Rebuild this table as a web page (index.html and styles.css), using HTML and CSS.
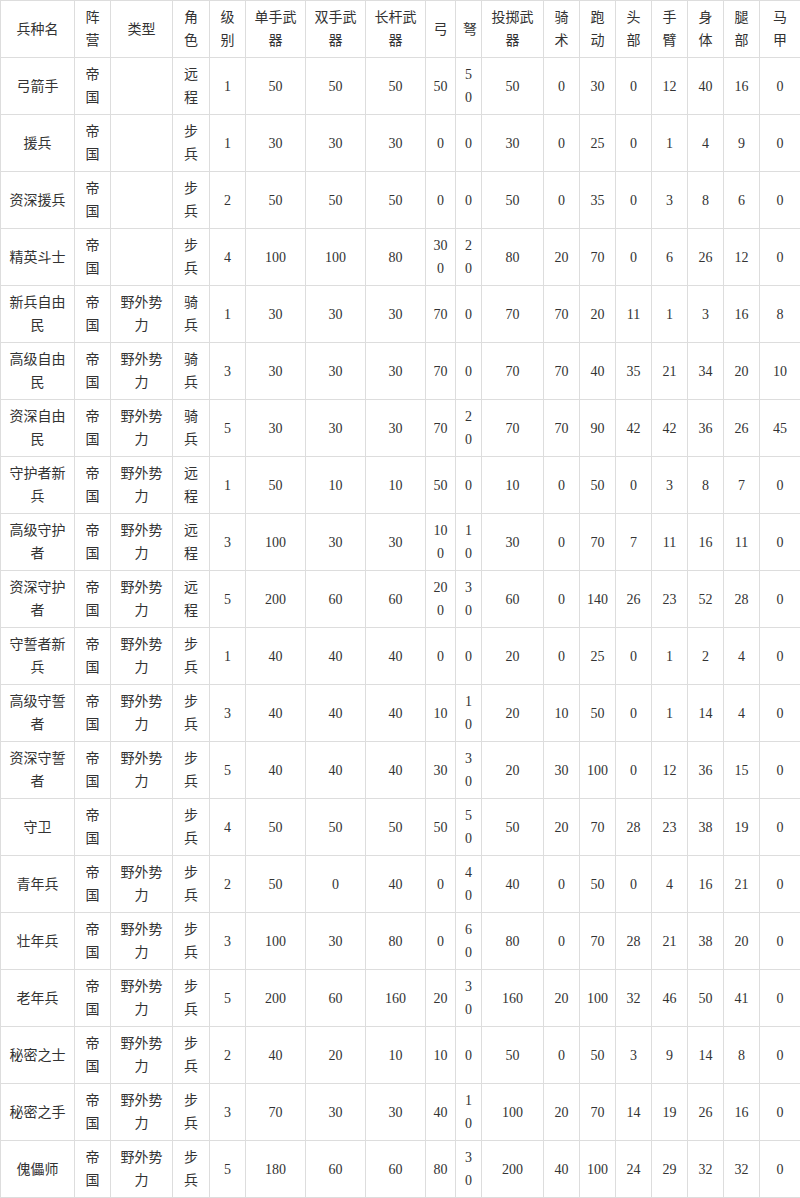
FILE: index.html
```html
<!DOCTYPE html>
<html lang="zh-CN">
<head>
<meta charset="utf-8">
<title>兵种属性</title>
<link rel="stylesheet" href="styles.css">
</head>
<body>
<table class="units">
<colgroup>
<col class="c74"><col class="c36"><col class="c62"><col class="c37"><col class="c36">
<col class="c60"><col class="c60"><col class="c60"><col class="c30"><col class="c26">
<col class="c62"><col class="c36"><col class="c36"><col class="c36"><col class="c36">
<col class="c36"><col class="c36"><col class="c41">
</colgroup>
<thead>
<tr><th>兵种名</th><th>阵营</th><th>类型</th><th>角色</th><th>级别</th><th>单手武器</th><th>双手武器</th><th>长杆武器</th><th>弓</th><th>弩</th><th>投掷武器</th><th>骑术</th><th>跑动</th><th>头部</th><th>手臂</th><th>身体</th><th>腿部</th><th>马甲</th></tr>
</thead>
<tbody>
<tr><td>弓箭手</td><td>帝国</td><td></td><td>远程</td><td>1</td><td>50</td><td>50</td><td>50</td><td>50</td><td>50</td><td>50</td><td>0</td><td>30</td><td>0</td><td>12</td><td>40</td><td>16</td><td>0</td></tr>
<tr><td>援兵</td><td>帝国</td><td></td><td>步兵</td><td>1</td><td>30</td><td>30</td><td>30</td><td>0</td><td>0</td><td>30</td><td>0</td><td>25</td><td>0</td><td>1</td><td>4</td><td>9</td><td>0</td></tr>
<tr><td>资深援兵</td><td>帝国</td><td></td><td>步兵</td><td>2</td><td>50</td><td>50</td><td>50</td><td>0</td><td>0</td><td>50</td><td>0</td><td>35</td><td>0</td><td>3</td><td>8</td><td>6</td><td>0</td></tr>
<tr><td>精英斗士</td><td>帝国</td><td></td><td>步兵</td><td>4</td><td>100</td><td>100</td><td>80</td><td>300</td><td>20</td><td>80</td><td>20</td><td>70</td><td>0</td><td>6</td><td>26</td><td>12</td><td>0</td></tr>
<tr><td>新兵自由民</td><td>帝国</td><td>野外势力</td><td>骑兵</td><td>1</td><td>30</td><td>30</td><td>30</td><td>70</td><td>0</td><td>70</td><td>70</td><td>20</td><td>11</td><td>1</td><td>3</td><td>16</td><td>8</td></tr>
<tr><td>高级自由民</td><td>帝国</td><td>野外势力</td><td>骑兵</td><td>3</td><td>30</td><td>30</td><td>30</td><td>70</td><td>0</td><td>70</td><td>70</td><td>40</td><td>35</td><td>21</td><td>34</td><td>20</td><td>10</td></tr>
<tr><td>资深自由民</td><td>帝国</td><td>野外势力</td><td>骑兵</td><td>5</td><td>30</td><td>30</td><td>30</td><td>70</td><td>20</td><td>70</td><td>70</td><td>90</td><td>42</td><td>42</td><td>36</td><td>26</td><td>45</td></tr>
<tr><td>守护者新兵</td><td>帝国</td><td>野外势力</td><td>远程</td><td>1</td><td>50</td><td>10</td><td>10</td><td>50</td><td>0</td><td>10</td><td>0</td><td>50</td><td>0</td><td>3</td><td>8</td><td>7</td><td>0</td></tr>
<tr><td>高级守护者</td><td>帝国</td><td>野外势力</td><td>远程</td><td>3</td><td>100</td><td>30</td><td>30</td><td>100</td><td>10</td><td>30</td><td>0</td><td>70</td><td>7</td><td>11</td><td>16</td><td>11</td><td>0</td></tr>
<tr><td>资深守护者</td><td>帝国</td><td>野外势力</td><td>远程</td><td>5</td><td>200</td><td>60</td><td>60</td><td>200</td><td>30</td><td>60</td><td>0</td><td>140</td><td>26</td><td>23</td><td>52</td><td>28</td><td>0</td></tr>
<tr><td>守誓者新兵</td><td>帝国</td><td>野外势力</td><td>步兵</td><td>1</td><td>40</td><td>40</td><td>40</td><td>0</td><td>0</td><td>20</td><td>0</td><td>25</td><td>0</td><td>1</td><td>2</td><td>4</td><td>0</td></tr>
<tr><td>高级守誓者</td><td>帝国</td><td>野外势力</td><td>步兵</td><td>3</td><td>40</td><td>40</td><td>40</td><td>10</td><td>10</td><td>20</td><td>10</td><td>50</td><td>0</td><td>1</td><td>14</td><td>4</td><td>0</td></tr>
<tr><td>资深守誓者</td><td>帝国</td><td>野外势力</td><td>步兵</td><td>5</td><td>40</td><td>40</td><td>40</td><td>30</td><td>30</td><td>20</td><td>30</td><td>100</td><td>0</td><td>12</td><td>36</td><td>15</td><td>0</td></tr>
<tr><td>守卫</td><td>帝国</td><td></td><td>步兵</td><td>4</td><td>50</td><td>50</td><td>50</td><td>50</td><td>50</td><td>50</td><td>20</td><td>70</td><td>28</td><td>23</td><td>38</td><td>19</td><td>0</td></tr>
<tr><td>青年兵</td><td>帝国</td><td>野外势力</td><td>步兵</td><td>2</td><td>50</td><td>0</td><td>40</td><td>0</td><td>40</td><td>40</td><td>0</td><td>50</td><td>0</td><td>4</td><td>16</td><td>21</td><td>0</td></tr>
<tr><td>壮年兵</td><td>帝国</td><td>野外势力</td><td>步兵</td><td>3</td><td>100</td><td>30</td><td>80</td><td>0</td><td>60</td><td>80</td><td>0</td><td>70</td><td>28</td><td>21</td><td>38</td><td>20</td><td>0</td></tr>
<tr><td>老年兵</td><td>帝国</td><td>野外势力</td><td>步兵</td><td>5</td><td>200</td><td>60</td><td>160</td><td>20</td><td>30</td><td>160</td><td>20</td><td>100</td><td>32</td><td>46</td><td>50</td><td>41</td><td>0</td></tr>
<tr><td>秘密之士</td><td>帝国</td><td>野外势力</td><td>步兵</td><td>2</td><td>40</td><td>20</td><td>10</td><td>10</td><td>0</td><td>50</td><td>0</td><td>50</td><td>3</td><td>9</td><td>14</td><td>8</td><td>0</td></tr>
<tr><td>秘密之手</td><td>帝国</td><td>野外势力</td><td>步兵</td><td>3</td><td>70</td><td>30</td><td>30</td><td>40</td><td>10</td><td>100</td><td>20</td><td>70</td><td>14</td><td>19</td><td>26</td><td>16</td><td>0</td></tr>
<tr><td>傀儡师</td><td>帝国</td><td>野外势力</td><td>步兵</td><td>5</td><td>180</td><td>60</td><td>60</td><td>80</td><td>30</td><td>200</td><td>40</td><td>100</td><td>24</td><td>29</td><td>32</td><td>32</td><td>0</td></tr>
</tbody>
</table>
</body>
</html>
```
FILE: styles.css
```css
html, body {
  margin: 0;
  padding: 0;
  background: #fff;
}
body {
  font-family: "Liberation Serif", "Noto Sans CJK SC", serif;
  font-size: 14px;
  color: #333;
}
.units {
  width: 800px;
  table-layout: fixed;
  border-collapse: collapse;
}
.units th,
.units td {
  border: 1px solid #ddd;
  padding: 5px 7px;
  line-height: 23px;
  height: 46px;
  text-align: center;
  vertical-align: middle;
  font-weight: normal;
  word-break: break-all;
  box-sizing: content-box;
}
.c74 { width: 74px; }
.c62 { width: 62px; }
.c60 { width: 60px; }
.c41 { width: 41px; }
.c37 { width: 37px; }
.c36 { width: 36px; }
.c30 { width: 30px; }
.c26 { width: 26px; }
```
